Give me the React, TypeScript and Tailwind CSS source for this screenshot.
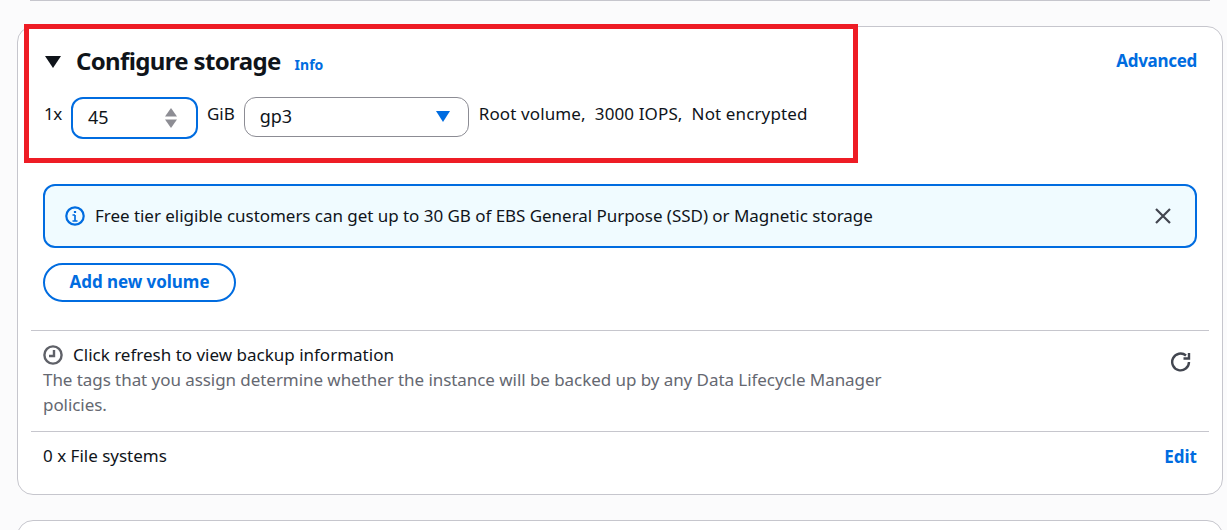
const font = { fontFamily: '"Noto Sans", sans-serif' };

function Stepper() {
  return (
    <svg width="14" height="22" viewBox="0 0 14 22" className="absolute right-[18px] top-[8px]">
      <path d="M7 1 L13 9.5 H1 Z" fill="#8d8d94" />
      <path d="M1 12.5 H13 L7 21 Z" fill="#8d8d94" />
    </svg>
  );
}

function ClockIcon() {
  return (
    <svg width="20" height="20" viewBox="0 0 20 20" fill="none" stroke="#5f6168" strokeWidth="2.4">
      <circle cx="10" cy="10" r="8.6" />
      <path d="M11 5 V11 H6" />
    </svg>
  );
}

function InfoIcon() {
  return (
    <svg width="20" height="20" viewBox="0 0 20 20" fill="none" stroke="#006ce0" strokeWidth="2.2">
      <circle cx="10" cy="10" r="8.7" />
      <path d="M10 9 V15 M7.5 15 H12.5 M7.5 9 H10" strokeWidth="1.7" />
      <path d="M10 5 V7" />
    </svg>
  );
}

function RefreshIcon() {
  return (
    <svg width="22" height="22" viewBox="0 0 22 22" fill="none" stroke="#424650" strokeWidth="2.4">
      <path d="M19 11 A8.4 8.4 0 1 1 16 4.5" />
      <path d="M19 2 V7.5 H13.5" />
    </svg>
  );
}

function CloseIcon() {
  return (
    <svg width="16" height="16" viewBox="0 0 16 16" fill="none" stroke="#424650" strokeWidth="2.2">
      <path d="M1 1 L15 15 M15 1 L1 15" />
    </svg>
  );
}

export default function App() {
  return (
    <div className="relative h-[530px] w-[1227px] overflow-hidden bg-[#fbfbfc] text-[#0f141a]" style={font}>
      {/* Previous card edge */}
      <div className="mx-[30px] h-px w-[1180px] bg-[#c6c6cd]" />

      {/* Configure storage card */}
      <div className="ml-[17px] mt-[25px] h-[469px] w-[1206px] rounded-[16px] border border-[#c6c6cd] bg-white">
        <div className="flex items-start justify-between pl-[27px] pr-[25px] pt-[19px]">
          <div className="flex items-center">
            <svg width="16" height="12" viewBox="0 0 16 12" className="mt-[-1px]">
              <path d="M0 0 H16 L8 12 Z" fill="#0f141a" />
            </svg>
            <h2 className="ml-[15px] mt-[-1px] mb-[1px] text-[24px] leading-[32px] font-bold tracking-[-0.65px]">Configure storage</h2>
            <span className="ml-[14px] mt-[5px] text-[14px] leading-[20px] font-bold text-[#006ce0]">Info</span>
          </div>
          <span className="mt-[3px] text-[17px] leading-[24px] font-bold tracking-[-0.3px] text-[#006ce0]">Advanced</span>
        </div>

        <div className="mt-[19px] flex items-start pl-[26px]">
          <span className="mt-[5px] text-[17px] leading-[24px] tracking-[-0.4px]">1x</span>
          <div className="relative ml-[9px] flex h-[42px] w-[127px] items-center rounded-[12px] border-2 border-[#006ce0] pb-[2px] pl-[15px] text-[18px]">
            45
            <Stepper />
          </div>
          <span className="ml-[9px] mt-[5px] text-[17px] leading-[24px]">GiB</span>
          <div className="ml-[9px] flex h-[40px] w-[225px] items-center justify-between rounded-[12px] border border-[#8c8c94] pb-px pl-[15px] pr-[18px] text-[18px]">
            gp3
            <svg width="14" height="11" viewBox="0 0 14 11">
              <path d="M0 0 H14 L7 11 Z" fill="#006ce0" />
            </svg>
          </div>
          <span className="ml-[10px] mt-[5px] text-[17px] leading-[24px] tracking-[0.12px] whitespace-pre">
            Root volume,  3000 IOPS,  Not encrypted
          </span>
        </div>

        <div className="mx-[25px] mt-[45px] flex h-[64px] items-center justify-between rounded-[12px] border-2 border-[#006ce0] bg-[#f0fbff] pl-[20px] pr-[24px]">
          <div className="flex items-center gap-[10px]">
            <InfoIcon />
            <span className="text-[17px] leading-[24px] tracking-[-0.04px]">
              Free tier eligible customers can get up to 30 GB of EBS General Purpose (SSD) or Magnetic storage
            </span>
          </div>
          <CloseIcon />
        </div>

        <div className="ml-[25px] mt-[15px] flex h-[39px] w-[193px] items-center justify-center rounded-[20px] border-2 border-[#006ce0] pb-[2px] text-[17px] font-bold tracking-[-0.05px] text-[#006ce0]">
          Add new volume
        </div>

        <div className="mx-[13px] mt-[28px] h-px bg-[#c6c6cd]" />

        <div className="flex items-start justify-between pl-[25px] pr-[30px] pt-[12px]">
          <div className="w-[860px]">
            <div className="flex items-center gap-[10px] text-[17px] leading-[24px]">
              <ClockIcon />
              Click refresh to view backup information
            </div>
            <p className="text-[17px] leading-[25px] tracking-[-0.06px] text-[#656871]">
              The tags that you assign determine whether the instance will be backed up by any Data Lifecycle Manager policies.
            </p>
          </div>
          <div className="mt-[8px]">
            <RefreshIcon />
          </div>
        </div>

        <div className="mx-[13px] mt-[14px] h-px bg-[#c6c6cd]" />

        <div className="flex items-center justify-between pl-[25px] pr-[25px] pt-[11px] text-[17px] leading-[24px]">
          <span>0 x File systems</span>
          <span className="pt-[2px] font-bold text-[#006ce0]">Edit</span>
        </div>
      </div>

      {/* Next card edge */}
      <div className="ml-[17px] mt-[25px] h-[40px] w-[1206px] rounded-[16px] border border-[#c6c6cd] bg-white" />

      {/* Red annotation box */}
      <div className="absolute left-[24px] top-[24px] h-[139px] w-[834px] border-[5px] border-[#ee1c25]" />
    </div>
  );
}
